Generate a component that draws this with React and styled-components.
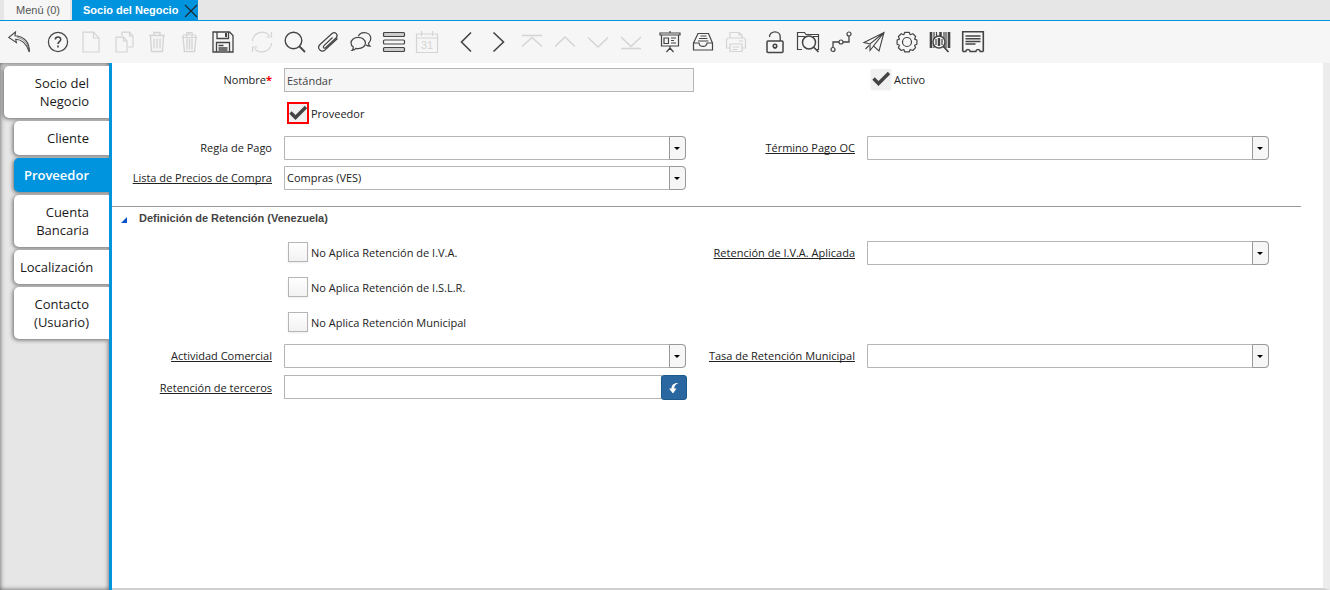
import React, { useState } from 'react';
import styled, { createGlobalStyle, css } from 'styled-components';

const GlobalStyle = createGlobalStyle`
  * {
    box-sizing: border-box;
  }

  body {
    margin: 0;
    background: #fff;
    color: #222;
    font-family: 'Open Sans', sans-serif;
    font-size: 11px;
    line-height: 16px;
  }

  button, input, select {
    font: inherit;
    color: inherit;
  }
`;

// Page layout
const Page = styled.div`
  display: flex;
  flex-direction: column;
  min-height: 100vh;
`;

const Body = styled.div`
  display: flex;
  flex: 1;
`;

// Window tabs
const TabStrip = styled.nav`
  display: flex;
  gap: 2px;
  height: 21px;
  padding-left: 4px;
  background: #e6e6e6;
  border-bottom: 1px solid #0093de;
`;

const WindowTab = styled.div`
  display: flex;
  align-items: center;
  background: ${props => props.$active ? '#0093de' : '#f6f6f6'};
`;

const WindowTabButton = styled.button`
  height: 20px;
  padding: 0 ${props => props.$active ? '6px' : '10px'} 0 ${props => props.$active ? '11px' : '12px'};
  border: 0;
  background: none;
  font-family: 'Liberation Sans', sans-serif;
  font-weight: ${props => props.$active ? 'bold' : 'normal'};
  color: ${props => props.$active ? '#fff' : '#555'};
`;

const CloseButton = styled.button`
  display: flex;
  padding: 2px 0 0;
  border: 0;
  background: none;
  color: #1c2a33;
`;

// Toolbar
const Toolbar = styled.div`
  display: flex;
  align-items: center;
  gap: 1px;
  height: 42px;
  padding-left: 3px;
  background: #f6f6f6;
`;

const ToolButton = styled.button`
  display: flex;
  align-items: center;
  justify-content: center;
  width: 32px;
  height: 32px;
  margin-left: ${props => props.$first ? '6px' : '0'};
  padding: 0;
  border: 0;
  background: none;
  color: #444;

  &:disabled {
    color: #d4d4d4;
  }
`;

const Icon = styled.svg`
  display: block;
  width: 22px;
  height: 22px;
  fill: none;
  stroke: currentColor;
  stroke-width: 1.2;
  overflow: visible;
`;

// Sidebar tabs
const Sidebar = styled.nav`
  display: flex;
  flex-direction: column;
  align-items: flex-end;
  gap: 3px;
  width: 112px;
  padding: 3px 0 0 4px;
  border-right: 3px solid #0093de;
  background: #e6e6e6;
  box-shadow: inset 0 0 5px #555;
`;

const SideTab = styled.button`
  width: ${props => props.$parent ? '105px' : '95px'};
  padding: 8px 20px 8px 6px;
  border: 0;
  border-radius: 5px 0 0 5px;
  background: ${props => props.$active ? '#0093de' : '#fff'};
  box-shadow: -1px 1px 4px #666;
  clip-path: inset(-6px 0 -6px -6px);
  color: ${props => props.$active ? '#fff' : '#1a1a1a'};
  font-size: 13px;
  font-weight: ${props => props.$active ? '600' : '400'};
  line-height: 18px;
  text-align: right;
`;

// Form
const Content = styled.main`
  flex: 1;
  border-right: 7px solid #ececec;
  border-bottom: 2px solid #d0d0d0;
`;

const Rows = styled.div`
  display: grid;
  row-gap: ${props => props.$gap};
  padding: ${props => props.$top} 45px 0 0;
`;

const Row = styled.div`
  display: grid;
  grid-template-columns: 1fr 1fr;
  align-items: center;
  min-height: ${props => props.$height || '24px'};
`;

const Field = styled.div`
  display: grid;
  grid-template-columns: 160px 1fr;
  column-gap: 12px;
  align-items: center;
  padding-right: 1px;
`;

const Label = styled.label`
  text-align: right;
  ${props => props.$zoom && css`
    text-decoration: underline;
    text-decoration-skip-ink: none;
    text-underline-offset: 1px;
  `}
`;

const Required = styled.span`
  color: #f00;
  font-weight: bold;
`;

const TextInput = styled.input`
  min-width: 0;
  width: 100%;
  height: 24px;
  padding: 0 2px;
  border: 1px solid #b5b5b5;
  border-radius: 0;
  outline: 0;
  background: #fff;

  &:read-only {
    background: #f6f6f6;
    color: #444;
  }
`;

const ComboBox = styled.div`
  position: relative;
  display: flex;
  margin-right: 8px;
`;

const Select = styled.select`
  appearance: none;
  width: 100%;
  height: 24px;
  padding: 0 20px 0 2px;
  border: 1px solid #b5b5b5;
  border-radius: 0 4px 4px 0;
  outline: 0;
  background: #fff;
`;

const Arrow = styled.span`
  position: absolute;
  top: 0;
  right: 0;
  display: flex;
  align-items: center;
  justify-content: center;
  width: 17px;
  height: 24px;
  padding-right: 1px;
  border: 1px solid #999;
  border-radius: 0 4px 4px 0;
  background: #f6f6f6;
  pointer-events: none;

  &::before {
    content: '';
    border: 3px solid transparent;
    border-top-color: #000;
    border-bottom: 0;
  }
`;

const Search = styled.div`
  display: flex;
  margin-right: 7px;
`;

const SearchButton = styled.button`
  display: flex;
  flex: none;
  align-items: center;
  justify-content: center;
  width: 26px;
  height: 25px;
  margin-left: -1px;
  padding: 0;
  border: 1px solid #1c5a8c;
  border-radius: 3px;
  background: #2a669f;
`;

const CheckLabel = styled.label`
  display: flex;
  grid-column: 2;
  align-items: center;
  gap: 3px;
  padding-left: 4px;
`;

const checkMark = "url(\"data:image/svg+xml,%3Csvg xmlns='http://www.w3.org/2000/svg' viewBox='0 0 20 20'%3E%3Cpath d='M2.500 9.500l5 5L18 4' fill='none' stroke='%23444' stroke-width='3.4'/%3E%3C/svg%3E\")";

const CheckInput = styled.input`
  appearance: none;
  width: 20px;
  height: 20px;
  margin: 0 0 2px;
  border: 1px solid #b5b5b5;
  background: linear-gradient(#fff, #f2f2f2);
  box-shadow: 0 1px 2px rgba(0, 0, 0, 0.08);
  outline: ${props => props.$marked ? '2px solid #f00' : '0'};
  outline-offset: -1px;

  &:checked {
    border-color: transparent;
    background: ${checkMark} border-box center / 20px 20px no-repeat, #f0f0f0;
  }
`;

const SectionTitle = styled.button`
  display: flex;
  align-items: center;
  gap: 12px;
  width: 100%;
  height: 22px;
  padding: 0 9px;
  border: 0;
  background: none;
  color: #444;
  font-family: 'Liberation Sans', sans-serif;
  font-weight: bold;

  &::before {
    content: '';
    margin-top: 4px;
    border: 3px solid #0a50c8;
    border-top-color: transparent;
    border-left-color: transparent;
  }
`;

const Section = styled.section`
  margin: 16px 22px 0 0;
  border-top: 1px solid #999;
`;

const SectionRows = styled(Rows)`
  padding-right: 23px;
`;

const icons = {
    undo: (
        <>
            <path d="M7.5 1L.8 6.4l7.6 5.2-.7-3.3c5.5.1 10.4 3.6 13.6 12.7C21.8 12 16.6 5.200 7 4.700z" strokeWidth="1.1" />
            <path d="M9 6.500c6 .5 10 5 12 12" strokeWidth="0.6" />
        </>
    ),
    help: (
        <>
            <circle cx="11" cy="11" r="9.6" />
            <path d="M8.300 8.500c.2-3.500 5.500-3.300 5.400 0-.1 2-2.700 2.200-2.700 4.500M11 14.500v2" strokeWidth="1.600" />
        </>
    ),
    newDoc: <path d="M3 1.200h10.500L19 7v14H3zM13.500 1.200V7H19" />,
    copy: <path d="M9 5V1.200h7.500L20 5v11h-5M16.500 1.200V5H20M3 6.200h7.500L14 10v11H3zM10.500 6.200V10H14" />,
    trash: <path d="M3 4.500h16M8 4V1.500h6V4M4.500 5l1 15.500h11l1-15.500M8 7.500v10M11 7.500v10M14 7.500v10" strokeWidth="1.400" />,
    trashFull: (
        <>
            <path d="M4 6.500l1.500 14h10l1.500-14M8 7.500v11M10.500 7.500v11M13 7.500v11" strokeWidth="1.400" />
            <path d="M3.500 6.500L4.500 4h3L8 1.500h5l.5 2.500h3l1 2.500zM7 5.500l3-3 3.500 3" />
        </>
    ),
    save: (
        <>
            <path d="M1 1h16.500L21 4.500V21H1zM5 1v6.500h11.500V1M4.500 21V11.500h13V21" strokeWidth="1.300" />
            <path d="M14 2v4" strokeWidth="2" />
            <path d="M6.500 14.500h5M6.500 17h9M6.500 19h9" strokeWidth="1.500" />
        </>
    ),
    refresh: <path d="M1.500 10a9.600 9.600 0 0 1 17-5.300M20.500 1v5h-5M20.500 12a9.600 9.600 0 0 1-17 5.300M1.500 21v-5h5" />,
    find: (
        <>
            <circle cx="9.500" cy="9.500" r="8.300" strokeWidth="1.400" />
            <path d="M15.500 15.500l5.500 5.500" strokeWidth="1.800" />
        </>
    ),
    clip: <path d="M15.500 6.500l-8.700 8.400c-1.300 1.400.4 3.100 1.800 1.800L19 7c2.900-3-.9-7.300-4.200-4.300L3 13.500c-3.600 3.500 1.200 9 5.200 5.400L20.500 7.500" strokeWidth="1.200" />,
    chat: (
        <>
            <path d="M8.500 5C9.500 2.800 11.500 1.600 14 1.600c4 0 6.800 2.500 6.800 6 0 2-.9 3.400-2.300 4.600.1 1.300.6 2.100 1.500 3-1.700 0-3-.5-4.200-1.500" />
            <path d="M8.200 6.300c4 0 7.200 2.400 7.200 5.700s-3.200 5.700-7.200 5.700c-.8 0-1.600-.1-2.300-.3-1 1.300-2.200 1.900-3.900 2 1-1 1.400-2 1.300-3.400C1.700 15 1 13.600 1 12c0-3.300 3.200-5.700 7.200-5.700z" />
        </>
    ),
    lines: (
        <>
            <rect x=".5" y="1.500" width="21" height="4" rx="1" fill="#ccc" />
            <rect x=".5" y="9" width="21" height="4" rx="1" />
            <rect x=".5" y="16.500" width="21" height="4" rx="1" fill="#ccc" />
        </>
    ),
    calendar: (
        <>
            <path d="M.5 3h21v18.500H.5zM.5 7h21M5.500 0v5M16.500 0v5" />
            <text x="11" y="18" textAnchor="middle" fontFamily="Liberation Sans, sans-serif" fontSize="11" fill="currentColor" stroke="none">31</text>
        </>
    ),
    left: <path d="M16 1.500L6.500 11l9.500 9.500" strokeWidth="1.600" />,
    right: <path d="M5.500 1.500L15.500 11l-10 9.500" strokeWidth="1.600" />,
    first: <path d="M1 4.500h20M1 15.500L11 6.500l10 9" strokeWidth="1.500" />,
    up: <path d="M1 15.500L11 6l10 9.500" strokeWidth="1.500" />,
    down: <path d="M1 6.500L11 16l10-9.500" strokeWidth="1.500" />,
    last: <path d="M1 6L11 15.500 21 6M1 17.500h20" strokeWidth="1.500" />,
    board: <path d="M1 2h20v2H1zM2.500 4v11h17V4M5 7h4.500v5.500H5zM12 7h5M12 9.500h3M12 12h5M11 0v2M11 15v2.500M11 17l-3.500 4M11 17l3.500 4" />,
    tray: <path d="M1.500 12L6 2.500h10.500l4 9.500v7h-19zM1.500 12H7c.5 4.500 7.500 4.500 8 0h5.500M8.500 5h6M7 7.500h8.500M6 10h10.500" />,
    print: <path d="M5 7V1.500h9L17 4v3M14 1.500V4h3M5 17H1.500V9c0-1.500 1-2 2-2h15c1.500 0 2 1 2 2v8H17M5 13h12v7.500H5zM7.500 16h7M7.500 18.500h5M14 10h4" />,
    lock: (
        <>
            <rect x="3" y="10" width="16" height="11.500" rx="1" strokeWidth="1.500" />
            <path d="M5.500 6C5.200 2.800 8 .8 11 .8s5.200 2.200 5.200 5V10" strokeWidth="1.300" />
            <circle cx="11" cy="15" r="1.800" strokeWidth="1.500" />
            <path d="M11 16v2" />
        </>
    ),
    folderFind: (
        <>
            <path d="M5 18.500H.5V1.500h7l1.500 2h12.500v15h-2M.5 5.500H8M16 5.500h5.500" />
            <circle cx="12" cy="11.500" r="6.500" fill="#f6f6f6" strokeWidth="1.500" />
            <path d="M16.500 16l5 5" strokeWidth="1.600" />
        </>
    ),
    workflow: (
        <>
            <path d="M3 16.500V11h6M13 11h6V5" strokeWidth="1.300" />
            <circle cx="3" cy="18.500" r="2" />
            <circle cx="11" cy="11" r="2" />
            <circle cx="19" cy="3" r="2" />
        </>
    ),
    send: <path d="M1 11.500L21 1.500 16 20l-5.500-5L21 1.500 7 13zM7 13v6.500l3.500-4.500M2.500 18l3.500-3.500" strokeWidth="1.100" />,
    gear: (
        <>
            <path d="M8.800 1.300h4.400l1 2.400 2.600-1 2.800 2.800-1 2.600 2.300.9v4.200l-2.300 1 1 2.500-2.800 2.800-2.600-1-1 2.400H8.800l-1-2.400-2.500 1-2.900-2.800 1-2.500-2.300-1V9l2.300-.9-1-2.600 2.900-2.800 2.500 1z" strokeLinejoin="round" />
            <circle cx="11" cy="11" r="4.500" />
        </>
    ),
    barcode: (
        <>
            <path d="M2 1v16M11.500 1v15M20 1v16" strokeWidth="2.600" />
            <path d="M5 1v16M7.500 1v16M15 1v16M17 1v16" />
            <circle cx="10" cy="11" r="6" fill="#f6f6f6" strokeWidth="1.400" />
            <path d="M7 8v6M13 8v6" />
            <path d="M10 7v8" strokeWidth="2.400" />
            <path d="M14.500 15.500l5 5.500" strokeWidth="1.800" />
        </>
    ),
    receipt: (
        <>
            <path d="M.7 20.500V.8h20.600v19.700" strokeWidth="1.600" />
            <path d="M.7 20.500h3c.5-2.700 4-2.700 4.500 0h5.600c.5-2.700 4-2.700 4.500 0h3" strokeWidth="1.600" />
            <path d="M3.500 5h15M3.500 7.700h15M3.500 10.400h15M3.500 13.100h10" strokeWidth="1.500" />
        </>
    ),
};

const toolGroups = [
    [['undo', 'Deshacer']],
    [
        ['help', 'Ayuda'], ['newDoc', 'Nuevo', true], ['copy', 'Copiar', true],
        ['trash', 'Eliminar', true], ['trashFull', 'Eliminar selección', true], ['save', 'Guardar'],
    ],
    [
        ['refresh', 'Actualizar', true], ['find', 'Buscar'], ['clip', 'Adjunto'],
        ['chat', 'Notas'], ['lines', 'Cuadrícula'], ['calendar', 'Calendario', true],
    ],
    [
        ['left', 'Registro padre'], ['right', 'Registro detalle'], ['first', 'Primero', true],
        ['up', 'Anterior', true], ['down', 'Siguiente', true], ['last', 'Último', true],
    ],
    [['board', 'Informe'], ['tray', 'Archivo'], ['print', 'Imprimir', true]],
    [
        ['lock', 'Bloquear'], ['folderFind', 'Acercar'], ['workflow', 'Flujo de trabajo'],
        ['send', 'Solicitudes'], ['gear', 'Proceso'], ['barcode', 'Producto'], ['receipt', 'Personalizar'],
    ],
];

const sideTabs = ['Socio del Negocio', 'Cliente', 'Proveedor', 'Cuenta Bancaria', 'Localización', 'Contacto (Usuario)'];

const Combo = ({ id, label, value = '', zoom = true }) => (
    <Field>
        <Label htmlFor={id} $zoom={zoom}>{label}</Label>
        <ComboBox>
            <Select id={id} defaultValue={value}>
                <option value={value}>{value}</option>
            </Select>
            <Arrow />
        </ComboBox>
    </Field>
);

const Check = ({ label, checked = false, marked = false }) => (
    <Field>
        <CheckLabel>
            <CheckInput type="checkbox" defaultChecked={checked} $marked={marked} />
            {label}
        </CheckLabel>
    </Field>
);

const App = () => {
    const [activeTab, setActiveTab] = useState('Proveedor');

    return (
        <Page>
            <GlobalStyle />
            <TabStrip>
                <WindowTab>
                    <WindowTabButton>Menú (0)</WindowTabButton>
                </WindowTab>
                <WindowTab $active>
                    <WindowTabButton $active>Socio del Negocio</WindowTabButton>
                    <CloseButton aria-label="Cerrar">
                        <svg width="14" height="14" viewBox="0 0 14 14" fill="none" stroke="currentColor">
                            <path d="M1 1l12 12M13 1L1 13" strokeWidth="1.2" />
                        </svg>
                    </CloseButton>
                </WindowTab>
            </TabStrip>

            <Toolbar role="toolbar">
                {toolGroups.map((group, g) => group.map(([name, title, disabled], i) => (
                    <ToolButton key={name} aria-label={title} disabled={disabled} $first={g > 0 && i === 0}>
                        <Icon viewBox="0 0 22 22">{icons[name]}</Icon>
                    </ToolButton>
                )))}
            </Toolbar>

            <Body>
                <Sidebar>
                    {sideTabs.map((tab, i) => (
                        <SideTab key={tab} $parent={i === 0} $active={tab === activeTab} onClick={() => setActiveTab(tab)}>
                            {tab}
                        </SideTab>
                    ))}
                </Sidebar>

                <Content>
                    <Rows $gap="6px" $top="5px">
                        <Row>
                            <Field>
                                <Label htmlFor="nombre">Nombre<Required>*</Required></Label>
                                <TextInput id="nombre" defaultValue="Estándar" readOnly />
                            </Field>
                            <Check label="Activo" checked />
                        </Row>
                        <Row $height="32px">
                            <Check label="Proveedor" checked marked />
                        </Row>
                        <Row>
                            <Combo id="regla" label="Regla de Pago" zoom={false} />
                            <Combo id="termino" label="Término Pago OC" />
                        </Row>
                        <Row>
                            <Combo id="lista" label="Lista de Precios de Compra" value="Compras (VES)" />
                        </Row>
                    </Rows>

                    <Section>
                        <SectionTitle>Definición de Retención (Venezuela)</SectionTitle>
                        <SectionRows $gap="7px" $top="10px">
                            <Row $height="28px">
                                <Check label="No Aplica Retención de I.V.A." />
                                <Combo id="iva" label="Retención de I.V.A. Aplicada" />
                            </Row>
                            <Row $height="28px">
                                <Check label="No Aplica Retención de I.S.L.R." />
                            </Row>
                            <Row $height="28px">
                                <Check label="No Aplica Retención Municipal" />
                            </Row>
                            <Row>
                                <Combo id="actividad" label="Actividad Comercial" />
                                <Combo id="tasa" label="Tasa de Retención Municipal" />
                            </Row>
                            <Row>
                                <Field>
                                    <Label htmlFor="terceros" $zoom>Retención de terceros</Label>
                                    <Search>
                                        <TextInput id="terceros" />
                                        <SearchButton aria-label="Buscar tercero">
                                            <svg width="10" height="12" viewBox="0 0 10 12" fill="#fff">
                                                <path d="M9.500 1C5 .6 2.500 3 2.500 6.500H0L4 11.500 7.500 6.500H5.200C5.200 4 6.500 2 9.500 1z" />
                                            </svg>
                                        </SearchButton>
                                    </Search>
                                </Field>
                            </Row>
                        </SectionRows>
                    </Section>
                </Content>
            </Body>
        </Page>
    );
};

export default App;
